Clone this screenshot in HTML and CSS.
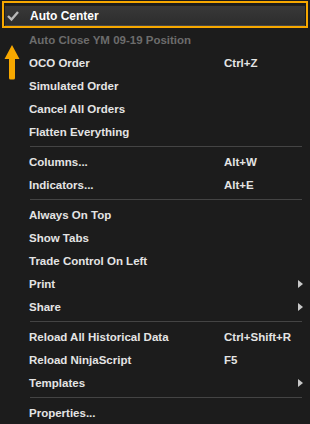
FILE: index.html
```html
<!DOCTYPE html>
<html lang="en">
<head>
  <meta charset="UTF-8">
  <meta name="viewport" content="width=device-width, initial-scale=1.0">
  <title>Chart Menu</title>
  <link rel="stylesheet" href="styles.css">
</head>
<body>
  <div class="menu">
    <div class="selected-wrap">
      <div class="item selected">
        <span class="check">
          <svg width="25" height="21" viewBox="0 0 25 21"><path d="M3 10 L6.5 13.5 L13 6" fill="none" stroke="#b8b8b8" stroke-width="2.4"/></svg>
        </span>
        <span class="label">Auto Center</span>
      </div>
    </div>
    <div class="item disabled"><span></span><span class="label">Auto Close YM 09-19 Position</span></div>
    <div class="item"><span></span><span class="label">OCO Order</span><span class="keys">Ctrl+Z</span></div>
    <div class="item"><span></span><span class="label">Simulated Order</span></div>
    <div class="item"><span></span><span class="label">Cancel All Orders</span></div>
    <div class="item"><span></span><span class="label">Flatten Everything</span></div>
    <div class="sep"></div>
    <div class="item"><span></span><span class="label">Columns...</span><span class="keys">Alt+W</span></div>
    <div class="item"><span></span><span class="label">Indicators...</span><span class="keys">Alt+E</span></div>
    <div class="sep"></div>
    <div class="item"><span></span><span class="label">Always On Top</span></div>
    <div class="item"><span></span><span class="label">Show Tabs</span></div>
    <div class="item"><span></span><span class="label">Trade Control On Left</span></div>
    <div class="item"><span></span><span class="label">Print</span><span class="keys"></span><span class="sub"></span></div>
    <div class="item"><span></span><span class="label">Share</span><span class="keys"></span><span class="sub"></span></div>
    <div class="sep"></div>
    <div class="item"><span></span><span class="label">Reload All Historical Data</span><span class="keys">Ctrl+Shift+R</span></div>
    <div class="item"><span></span><span class="label">Reload NinjaScript</span><span class="keys">F5</span></div>
    <div class="item"><span></span><span class="label">Templates</span><span class="keys"></span><span class="sub"></span></div>
    <div class="sep"></div>
    <div class="item"><span></span><span class="label">Properties...</span></div>

    <svg class="pointer" width="16" height="35" viewBox="0 0 16 35">
      <path d="M8 0 L0.5 14 L5 14 L5 33 Q5 34.5 6.5 34.5 L9.5 34.5 Q11 34.5 11 33 L11 14 L15.5 14 Z" fill="#f7a800"/>
    </svg>
  </div>
</body>
</html>
```

FILE: styles.css
```css
body {
  margin: 0;
  background: #1c1c1c;
  font-family: "Liberation Sans", Arial, sans-serif;
}
.menu {
  position: relative;
  padding-top: 1px;
  width: 310px;
  height: 424px;
  box-sizing: border-box;
}
.selected-wrap {
  margin: 0 2px;
  border: 2px solid #f7a800;
  padding: 2px 1px 0 1px;
}
.item {
  display: grid;
  grid-template-columns: 29px 195px 74px 5px;
  align-items: center;
  height: 23px;
  font-size: 11.5px;
  font-weight: bold;
  color: #e4e4e4;
}
.item.selected {
  grid-template-columns: 25px 195px 74px 5px;
  height: 21px;
  background: linear-gradient(#383838, #2d2d2d);
  border-top: 1px solid #1f1f1f;
  border-bottom: 1px solid #454545;
  box-sizing: border-box;
  font-size: 12px;
  color: #ffffff;
}
.item.disabled {
  color: #6c6c6c;
}
.check {
  display: flex;
  height: 19px;
}
.label {
  white-space: nowrap;
}
.keys {
  white-space: nowrap;
}
.sub {
  width: 0;
  height: 0;
  border-top: 4.5px solid transparent;
  border-bottom: 4.5px solid transparent;
  border-left: 5px solid #c8c8c8;
}
.sep {
  height: 7px;
  display: flex;
  align-items: center;
  padding: 0 8px 0 30px;
}
.sep::before {
  content: "";
  flex: 1;
  height: 1px;
  background: #444444;
}
.pointer {
  position: absolute;
  left: 4px;
  top: 45px;
}
```
